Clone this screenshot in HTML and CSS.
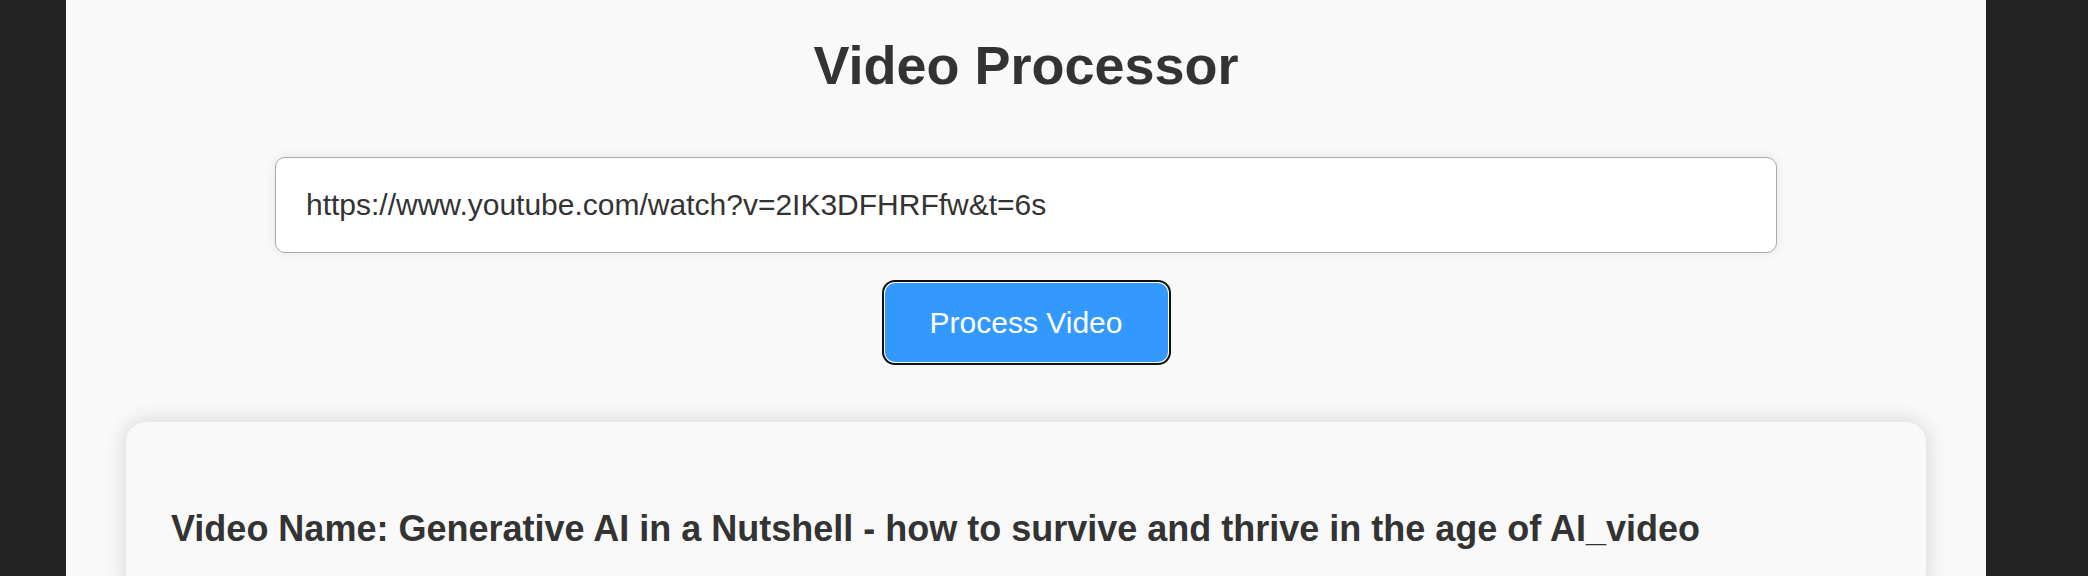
FILE: index.html
```html
<!DOCTYPE html>
<html lang="en">
<head>
<meta charset="utf-8">
<title>Video Processor</title>
<link rel="stylesheet" href="styles.css">
</head>
<body>
<div class="app">
  <h1 class="title">Video Processor</h1>
  <form class="form">
    <input class="url-input" type="text" value="https://www.youtube.com/watch?v=2IK3DFHRFfw&amp;t=6s">
    <button class="process-btn" type="button">Process Video</button>
  </form>
  <section class="result-card">
    <h2 class="video-name">Video Name: Generative AI in a Nutshell - how to survive and thrive in the age of AI_video</h2>
  </section>
</div>
</body>
</html>
```
FILE: styles.css
```css
html, body {
  margin: 0;
  padding: 0;
  background: #232323;
  font-family: "Liberation Sans", Arial, sans-serif;
  color: #333;
}

.app {
  width: 1920px;
  margin-left: 66px;
  min-height: 576px;
  background: #f9f9f9;
  padding-top: 35px;
  box-sizing: border-box;
  display: flex;
  flex-direction: column;
  align-items: center;
}

.title {
  margin: 0;
  font-size: 54px;
  line-height: 60px;
  font-weight: bold;
  color: #333;
  text-align: center;
}

.form {
  margin-top: 62px;
  display: flex;
  flex-direction: column;
  align-items: center;
  gap: 30px;
  width: 100%;
}

.url-input {
  width: 1502px;
  height: 96px;
  box-sizing: border-box;
  padding: 0 30px;
  border: 1px solid #aaa;
  border-radius: 10px;
  background: #fff;
  font-family: "Liberation Sans", Arial, sans-serif;
  font-size: 30px;
  color: #333;
  box-shadow: 0 0 12px rgba(0, 0, 0, 0.08);
  outline: none;
}

.process-btn {
  width: 283px;
  height: 79px;
  padding: 0;
  border: none;
  border-radius: 10px;
  background: #3399ff;
  color: #fff;
  font-family: "Liberation Sans", Arial, sans-serif;
  font-size: 30px;
  line-height: 34px;
  box-shadow: 0 0 0 1px #fff, 0 0 0 3px #101010;
  cursor: pointer;
}

.result-card {
  margin-top: 60px;
  width: 1800px;
  box-sizing: border-box;
  padding: 45px;
  background: #f9f9f9;
  border-radius: 20px;
  box-shadow: 0 0 22px rgba(0, 0, 0, 0.16);
}

.video-name {
  margin: 41px 0 0;
  font-size: 36px;
  line-height: 42px;
  font-weight: bold;
  color: #333;
}
```
